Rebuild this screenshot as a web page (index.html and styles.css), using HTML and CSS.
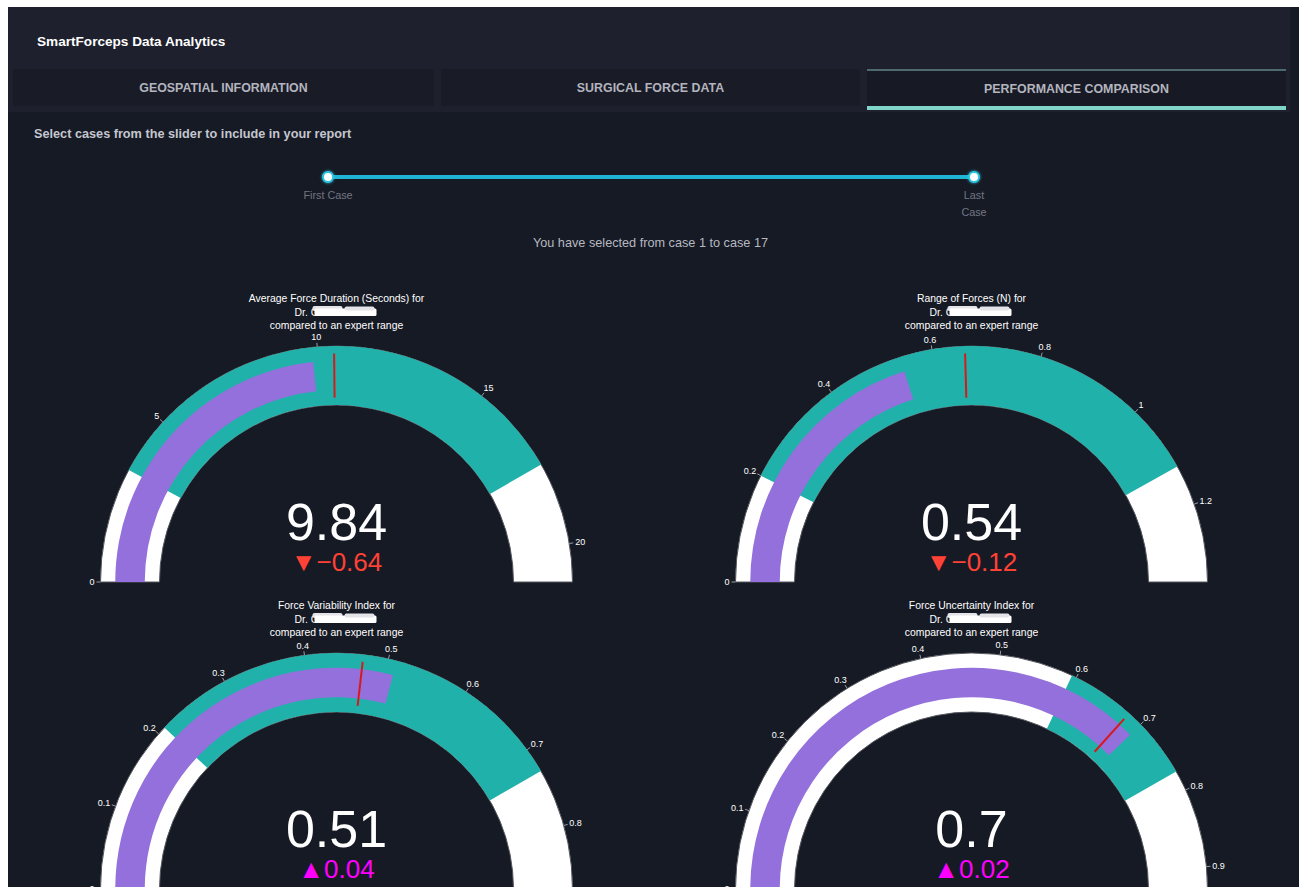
FILE: index.html
```html
<!DOCTYPE html>
<html lang="en">
<head>
<meta charset="utf-8">
<title>SmartForceps Data Analytics</title>
<link rel="stylesheet" href="styles.css">
</head>
<body>
<div class="app">
  <header class="top">
    <div class="brand">SmartForceps Data Analytics</div>
    <nav class="tabs">
      <div class="tab">GEOSPATIAL INFORMATION</div>
      <div class="tab">SURGICAL FORCE DATA</div>
      <div class="tab active">PERFORMANCE COMPARISON</div>
    </nav>
  </header>
  <main class="content">
    <p class="hint">Select cases from the slider to include in your report</p>
    <div class="slider">
      <div class="track">
        <span class="handle"></span>
        <span class="handle"></span>
      </div>
      <div class="marks">
        <span class="mark first">First Case</span>
        <span class="mark last">Last Case</span>
      </div>
    </div>
    <p class="selection">You have selected from case 1 to case 17</p>
    <section class="gauges" id="gauges"></section>
  </main>
</div>
<script src="script.js"></script>
</body>
</html>
```

FILE: styles.css
```css
* { box-sizing: border-box; }

html, body {
  background: #fff;
}

body {
  margin: 0;
  padding: 7px 0 0 8px;
  font-family: "Liberation Sans", Arial, Helvetica, sans-serif;
  overflow: hidden;
}

.app {
  background: #161a24;
  width: 1291px;
  height: 880px;
  overflow: hidden;
}

/* header band with brand and tabs */
.top {
  background: #1e202d;
  width: 1282px;
  padding: 0 4px 6px 5px;
}

.brand {
  height: 62px;
  padding: 27px 0 0 24px;
  font-size: 13.6px;
  line-height: 16px;
  font-weight: 700;
  color: #fff;
}

.tabs {
  display: grid;
  grid-template-columns: 421px 1fr 1fr;
  column-gap: 7px;
}

.tab {
  height: 37px;
  display: flex;
  align-items: center;
  justify-content: center;
  background: #191b27;
  color: #b3b5be;
  font-size: 12.4px;
  font-weight: 700;
}

.tab.active {
  background: #171a25;
  border-top: 2px solid #4d6a70;
  box-shadow: 0 4px 0 #7fd5ca;
}

/* case range picker */
.hint {
  margin: 14px 0 0 26px;
  font-size: 12.7px;
  line-height: 16px;
  font-weight: 700;
  color: #c4c6cf;
}

.slider {
  margin: 33px 0 0 320px;
  width: 646px;
}

.track {
  position: relative;
  height: 4px;
  background: #1fb6d5;
  border-radius: 2px;
}

.handle {
  position: absolute;
  top: -4px;
  width: 12px;
  height: 12px;
  border-radius: 50%;
  background: #fff;
  border: 2px solid #2ec4e0;
  box-shadow: 0 0 3px #2ec4e0;
}

.handle:first-child { left: -6px; }
.handle:last-child { right: -6px; }

.marks {
  display: flex;
  justify-content: space-between;
  margin: 7.5px -20px 0 -30px;
}

.mark {
  text-align: center;
  font-size: 10.8px;
  line-height: 17px;
  color: #737683;
}

.mark.first { width: 60px; }
.mark.last { width: 40px; }

.selection {
  width: 1285px;
  margin: 14.5px 0 0;
  text-align: center;
  font-size: 12.7px;
  line-height: 16px;
  color: #b6b9c2;
}

/* gauge grid */
.gauges {
  display: grid;
  grid-template-columns: 635px 635px;
  margin: 34px 0 0 11px;
}

.gauge {
  display: block;
  width: 635px;
  height: 307px;
  overflow: visible;
}

.g-title {
  font-size: 10.4px;
  fill: #fff;
}

.g-tick {
  font-size: 9px;
  fill: #fff;
}

.g-tickline {
  stroke: #9a9ca3;
  stroke-width: 1;
}

.g-bg {
  fill: #fff;
  stroke: #55575e;
  stroke-width: 1;
}

.g-step { fill: #20b2aa; }
.g-bar { fill: #9370db; }

.g-threshold {
  stroke: #d7191c;
  stroke-width: 2;
}

.g-value {
  font-size: 52px;
  fill: #fff;
}

.g-delta { font-size: 26px; }
.g-delta.down { fill: #ff4136; }
.g-delta.up { fill: #ff00ff; }

.g-blot { fill: #fff; }
.g-blot.faint { fill: #e4e4e8; }
```

FILE: script.js
```js
// Builds the four bullet gauges comparing a surgeon to the expert range.
const NS = 'http://www.w3.org/2000/svg';
const W = 635, H = 307, CX = 317.5, CY = 297, R = 236, RI = 177;

const data = [
  { title: 'Average Force Duration (Seconds) for', max: 21.1, ticks: ['0', '5', '10', '15', '20'],
    band: [3.32, 17.6], value: 9.84, ref: 10.48 },
  { title: 'Range of Forces (N) for', max: 1.344, ticks: ['0', '0.2', '0.4', '0.6', '0.8', '1', '1.2'],
    band: [0.2, 1.125], value: 0.54, ref: 0.66 },
  { title: 'Force Variability Index for', max: 0.876, ticks: ['0', '0.1', '0.2', '0.3', '0.4', '0.5', '0.6', '0.7', '0.8'],
    band: [0.21, 0.73], value: 0.51, ref: 0.47 },
  { title: 'Force Uncertainty Index for', max: 0.928, ticks: ['0', '0.1', '0.2', '0.3', '0.4', '0.5', '0.6', '0.7', '0.8', '0.9'],
    band: [0.594, 0.774], value: 0.7, ref: 0.68 }
];

function pt(r, a) {
  const t = a * Math.PI / 180;
  return [CX - r * Math.cos(t), CY - r * Math.sin(t)];
}

function sector(a1, a2, r1, r2) {
  const [x1, y1] = pt(r2, a1), [x2, y2] = pt(r2, a2);
  const [x3, y3] = pt(r1, a2), [x4, y4] = pt(r1, a1);
  return `M${x1} ${y1} A${r2} ${r2} 0 0 1 ${x2} ${y2} L${x3} ${y3} A${r1} ${r1} 0 0 0 ${x4} ${y4} Z`;
}

function el(name, attrs, text) {
  const n = document.createElementNS(NS, name);
  for (const k in attrs) n.setAttribute(k, attrs[k]);
  if (text !== undefined) n.textContent = text;
  return n;
}

function labelWidth(s) {
  let w = 0;
  for (const c of s) w += c === '.' ? 2.5 : 5;
  return w;
}

function gauge(g, idx) {
  const svg = el('svg', { class: 'gauge', width: W, height: H, viewBox: `0 0 ${W} ${H}` });
  const ang = v => v / g.max * 180;

  const defs = el('defs', {});
  const f = el('filter', { id: 'smudge' + idx, x: '-20%', y: '-60%', width: '140%', height: '220%' });
  f.appendChild(el('feGaussianBlur', { stdDeviation: '0.7' }));
  defs.appendChild(f);
  svg.appendChild(defs);

  // title, three lines; the surname is blotted out
  svg.appendChild(el('text', { class: 'g-title', x: CX, y: 17, 'text-anchor': 'middle' }, g.title));
  svg.appendChild(el('text', { class: 'g-title', x: CX - 42, y: 30.5 }, 'Dr. G'));
  const blot = el('g', { filter: `url(#smudge${idx})` });
  blot.appendChild(el('rect', { class: 'g-blot faint', x: CX - 24, y: 21, width: 30, height: 5, rx: 2 }));
  blot.appendChild(el('rect', { class: 'g-blot', x: CX - 22, y: 23.5, width: 62, height: 7.5, rx: 1.5 }));
  blot.appendChild(el('rect', { class: 'g-blot faint', x: CX + 8, y: 21.5, width: 30, height: 4, rx: 2 }));
  svg.appendChild(blot);
  svg.appendChild(el('text', { class: 'g-title', x: CX, y: 44, 'text-anchor': 'middle' }, 'compared to an expert range'));

  // arc background, expert band, value bar, reference line
  svg.appendChild(el('path', { class: 'g-bg', d: sector(0, 180, RI, R) }));
  svg.appendChild(el('path', { class: 'g-step', d: sector(ang(g.band[0]), ang(g.band[1]), RI, R) }));
  const mid = (R + RI) / 2, half = (R - RI) / 2;
  svg.appendChild(el('path', { class: 'g-bar', d: sector(0, ang(g.value), mid - half * 0.5, mid + half * 0.5) }));
  const [tx1, ty1] = pt(mid - half * 0.75, ang(g.ref));
  const [tx2, ty2] = pt(mid + half * 0.75, ang(g.ref));
  svg.appendChild(el('line', { class: 'g-threshold', x1: tx1, y1: ty1, x2: tx2, y2: ty2 }));

  // ticks
  g.ticks.forEach(t => {
    const a = ang(parseFloat(t));
    const rad = a * Math.PI / 180;
    const ux = -Math.cos(rad), uy = Math.sin(rad);
    const [px, py] = pt(R, a);
    const [qx, qy] = pt(R + 4, a);
    svg.appendChild(el('line', { class: 'g-tickline', x1: px, y1: py, x2: qx, y2: qy }));
    const w = labelWidth(t);
    const lx = px + ux * (6 + w / 2);
    const ly = py - uy * 10 + 3.2;
    svg.appendChild(el('text', { class: 'g-tick', x: lx.toFixed(1), y: ly.toFixed(1), 'text-anchor': 'middle' }, t));
  });

  // number and delta against the reference
  svg.appendChild(el('text', { class: 'g-value', x: CX, y: 255, 'text-anchor': 'middle' }, String(g.value)));
  const d = Math.round((g.value - g.ref) * 100) / 100;
  const down = d < 0;
  const txt = (down ? '\u25BC\u2212' : '\u25B2') + Math.abs(d).toFixed(2);
  svg.appendChild(el('text', { class: 'g-delta ' + (down ? 'down' : 'up'), x: CX, y: 286, 'text-anchor': 'middle' }, txt));

  return svg;
}

const host = document.getElementById('gauges');
data.forEach((g, i) => host.appendChild(gauge(g, i)));
```
